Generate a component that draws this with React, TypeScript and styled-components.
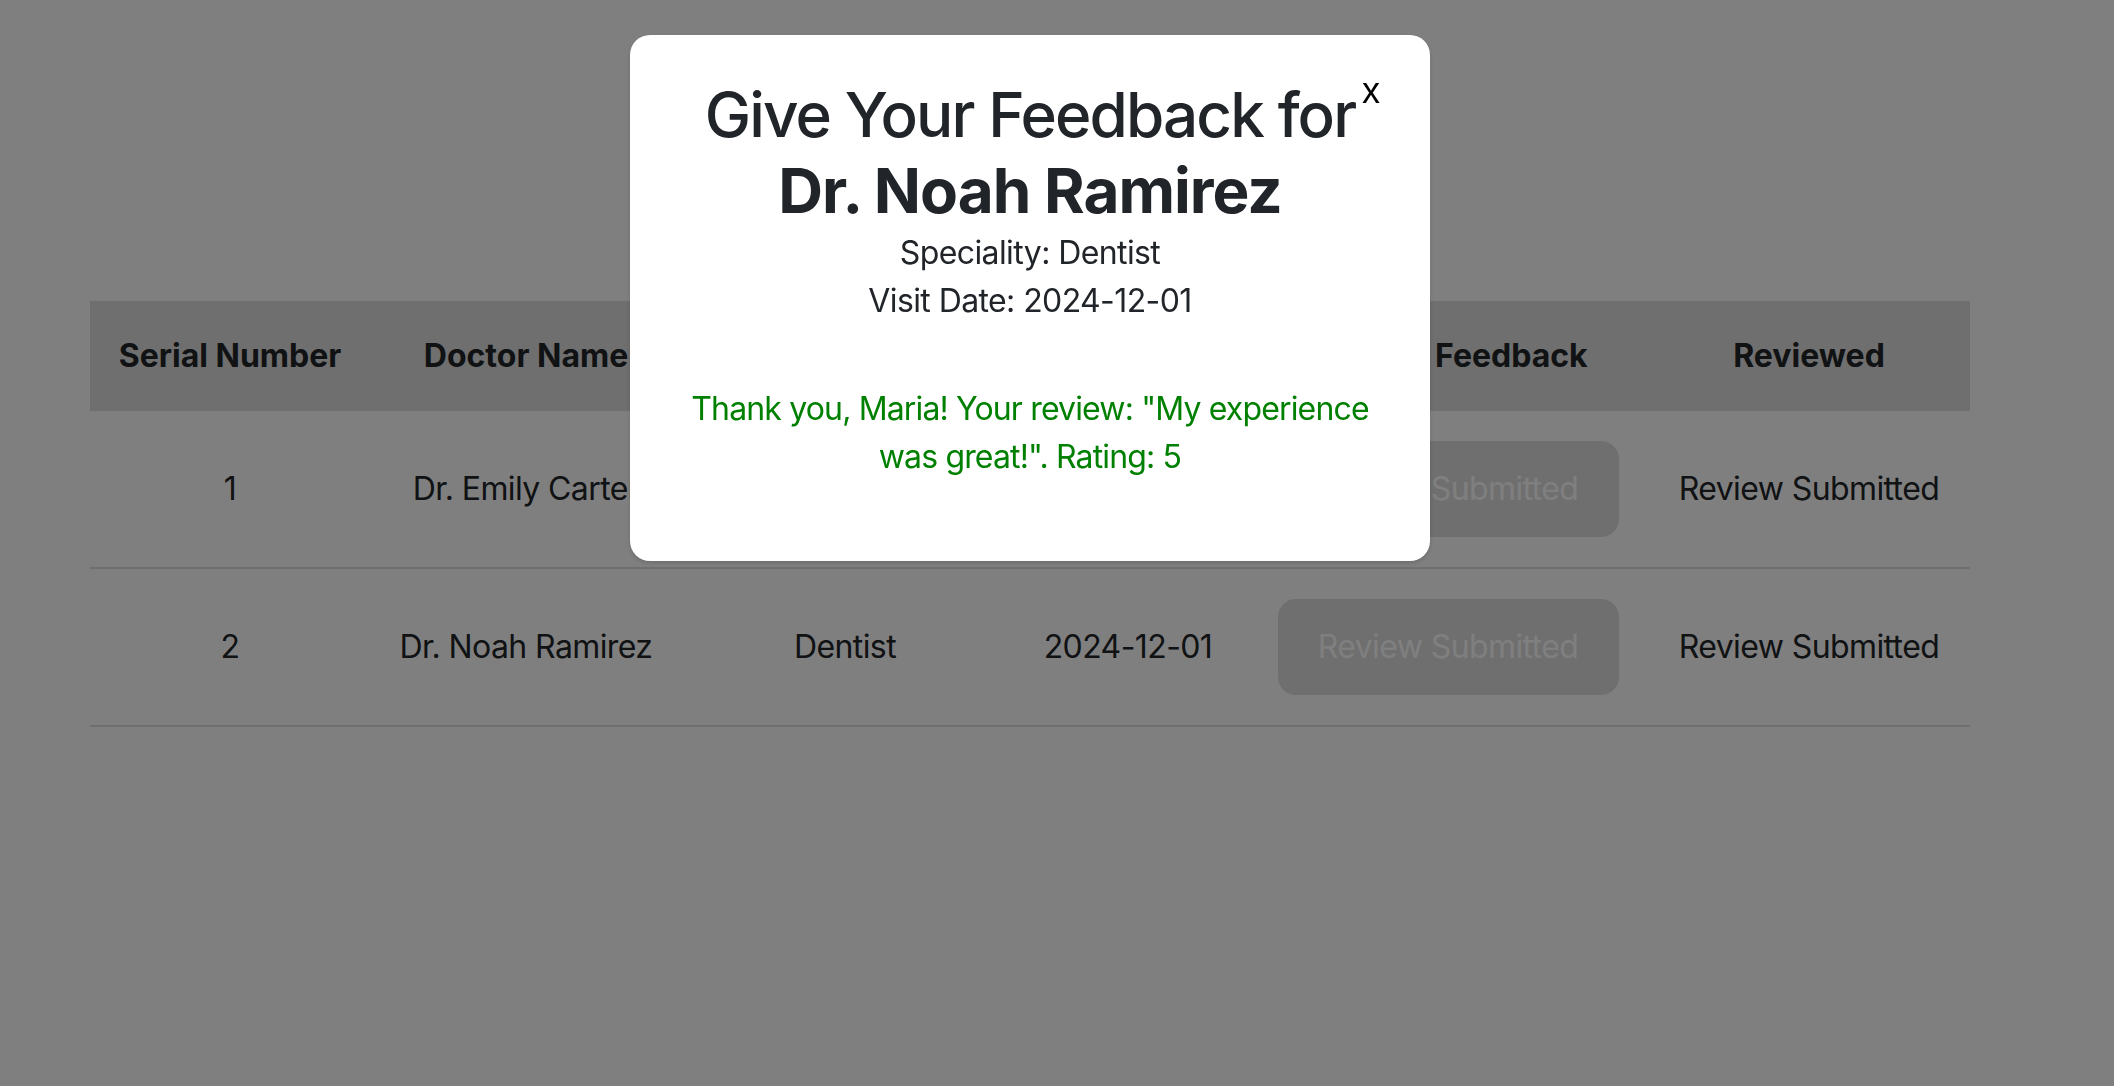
import styled, { createGlobalStyle } from "styled-components";

interface Appointment {
  id: number;
  doctor: string;
  speciality: string;
  date: string;
}

const appointments: Appointment[] = [
  { id: 1, doctor: "Dr. Emily Carter", speciality: "Cardiologist", date: "2024-11-20" },
  { id: 2, doctor: "Dr. Noah Ramirez", speciality: "Dentist", date: "2024-12-01" },
];

const columns = [
  { label: "Serial Number", width: 280 },
  { label: "Doctor Name", width: 312 },
  { label: "Speciality", width: 326 },
  { label: "Visit Date", width: 240 },
  { label: "Provide Feedback", width: 400 },
  { label: "Reviewed", width: 322 },
];

const GlobalStyle = createGlobalStyle`
  * {
    box-sizing: border-box;
  }
  body {
    margin: 0;
    background: #ffffff;
    color: #212529;
    font-family: Inter, "Noto Sans", sans-serif;
    font-size: 32px;
    line-height: 48px;
    letter-spacing: -0.6px;
  }
`;

export default function App() {
  return (
    <>
      <GlobalStyle />
      <Page>
        <Table>
          <colgroup>
            {columns.map((c) => (
              <Col key={c.label} $width={c.width} />
            ))}
          </colgroup>
          <thead>
            <tr>
              {columns.map((c) => (
                <HeadCell key={c.label}>{c.label}</HeadCell>
              ))}
            </tr>
          </thead>
          <tbody>
            {appointments.map((a) => (
              <Row key={a.id}>
                <Cell>{a.id}</Cell>
                <Cell>{a.doctor}</Cell>
                <Cell>{a.speciality}</Cell>
                <Cell>{a.date}</Cell>
                <Cell>
                  <SubmittedButton disabled>Review Submitted</SubmittedButton>
                </Cell>
                <Cell>Review Submitted</Cell>
              </Row>
            ))}
          </tbody>
        </Table>
      </Page>

      <Overlay>
        <Modal>
          <CloseButton>x</CloseButton>
          <Title>
            Give Your Feedback for
            <DoctorName>Dr. Noah Ramirez</DoctorName>
          </Title>
          <Info>
            <InfoLine>Speciality: Dentist</InfoLine>
            <InfoLine>Visit Date: 2024-12-01</InfoLine>
          </Info>
          <ThankYou>
            Thank you, Maria! Your review: "My experience was great!". Rating: 5
          </ThankYou>
        </Modal>
      </Overlay>
    </>
  );
}

const Page = styled.div`
  padding: 301px 144px 0 90px;
`;

const Table = styled.table`
  width: 100%;
  border-collapse: collapse;
  table-layout: fixed;
`;

const Col = styled.col<{ $width: number }>`
  width: ${(p) => p.$width}px;
`;

const HeadCell = styled.th`
  padding: 31px 8px;
  background: #dedede;
  color: #212529;
  font-weight: 700;
  letter-spacing: 0;
  text-align: center;
  white-space: nowrap;
`;

const Row = styled.tr`
  border-bottom: 2px solid #dedede;
`;

const Cell = styled.td`
  padding: 30px 8px;
  text-align: center;
  vertical-align: middle;
  white-space: nowrap;
`;

const SubmittedButton = styled.button`
  width: 341px;
  padding: 24px 0;
  border: none;
  border-radius: 18px;
  background: #dedede;
  color: #ffffff;
  font-family: inherit;
  font-size: 32px;
  line-height: 48px;
  letter-spacing: -0.6px;
`;

const Overlay = styled.div`
  position: fixed;
  inset: 0;
  background: rgba(0, 0, 0, 0.5);
`;

const Modal = styled.div`
  position: absolute;
  top: 35px;
  left: 630px;
  width: 800px;
  padding: 42px 40px 80px;
  background: #ffffff;
  border-radius: 20px;
  box-shadow: 0 2px 4px rgba(0, 0, 0, 0.15);
  text-align: center;
`;

const CloseButton = styled.button`
  position: absolute;
  top: 32px;
  right: 50px;
  padding: 0;
  border: none;
  background: none;
  color: #000000;
  font-family: "Liberation Sans", Arial, sans-serif;
  font-size: 36px;
  line-height: 48px;
  cursor: pointer;
`;

const Title = styled.h2`
  margin: 0;
  font-size: 62px;
  line-height: 76px;
  font-weight: 500;
  letter-spacing: -1.9px;
  color: #212529;
`;

const DoctorName = styled.strong`
  display: block;
  font-weight: 700;
  letter-spacing: -1px;
`;

const Info = styled.div`
  margin-bottom: 60px;
`;

const InfoLine = styled.p`
  margin: 0;
`;

const ThankYou = styled.p`
  margin: 0;
  color: #008000;
  letter-spacing: -0.85px;
`;
